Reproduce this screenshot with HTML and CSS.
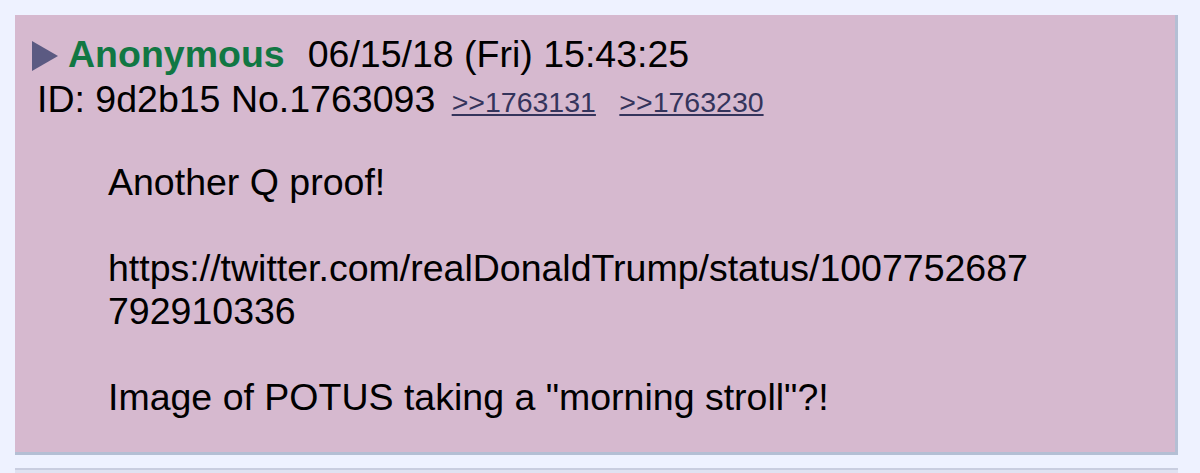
FILE: index.html
```html
<!DOCTYPE html>
<html>
<head>
<meta charset="utf-8">
<link rel="stylesheet" href="styles.css">
</head>
<body>
<div class="thread">
  <div class="post">
    <div class="post-line1">
      <svg class="arrow" width="26" height="30" viewBox="0 0 26 30"><polygon points="0,0 26,15 0,30" fill="#5b5a82"/></svg>
      <span class="name">Anonymous</span>
      <span class="date">06/15/18 (Fri) 15:43:25</span>
    </div>
    <div class="post-line2">
      <span class="pid">ID: 9d2b15 No.1763093</span>
      <a class="backlink first" href="#">&gt;&gt;1763131</a>
      <a class="backlink" href="#">&gt;&gt;1763230</a>
    </div>
    <div class="message">
      <p class="msg-p msg-first">Another Q proof!</p>
      <p class="msg-p">https://twitter.com/realDonaldTrump/status/1007752687<br>792910336</p>
      <p class="msg-p">Image of POTUS taking a "morning stroll"?!</p>
    </div>
  </div>
  <div class="next-post"></div>
</div>
</body>
</html>
```

FILE: styles.css
```css
html, body {
  margin: 0;
  padding: 0;
  background: #eef2ff;
  height: 473px;
  overflow: hidden;
}
body {
  font-family: "Liberation Sans", Arial, sans-serif;
  color: #000;
}
.thread {
  padding: 15px 22px 0 15px;
}
.post {
  background: #d6b9cf;
  border-right: 3px solid #b4bfd4;
  border-bottom: 3px solid #b4bfd4;
  padding: 17px 0 33px 17px;
  font-size: 37.5px;
}
.post-line1 {
  display: flex;
  align-items: center;
  height: 45px;
  line-height: 45px;
}
.arrow {
  flex: none;
  margin-top: 3px;
  margin-right: 10px;
}
.name {
  color: #117743;
  font-weight: bold;
  margin-right: 23px;
}
.post-line2 {
  line-height: 45px;
  height: 45px;
  padding-left: 5px;
  white-space: nowrap;
}
.backlink {
  font-size: 28.5px;
  color: #34345c;
  text-decoration: underline;
  margin-left: 6px;
}
.backlink + .backlink {
  margin-left: 13px;
}
.message {
  padding-left: 76px;
}
.msg-p {
  margin: 43px 0 0 0;
  line-height: 43px;
}
.msg-first {
  margin-top: 39px;
}
.next-post {
  margin-top: 13px;
  height: 20px;
  background: #dfe2f1;
  border-top: 2px solid #c9cee0;
}
```
